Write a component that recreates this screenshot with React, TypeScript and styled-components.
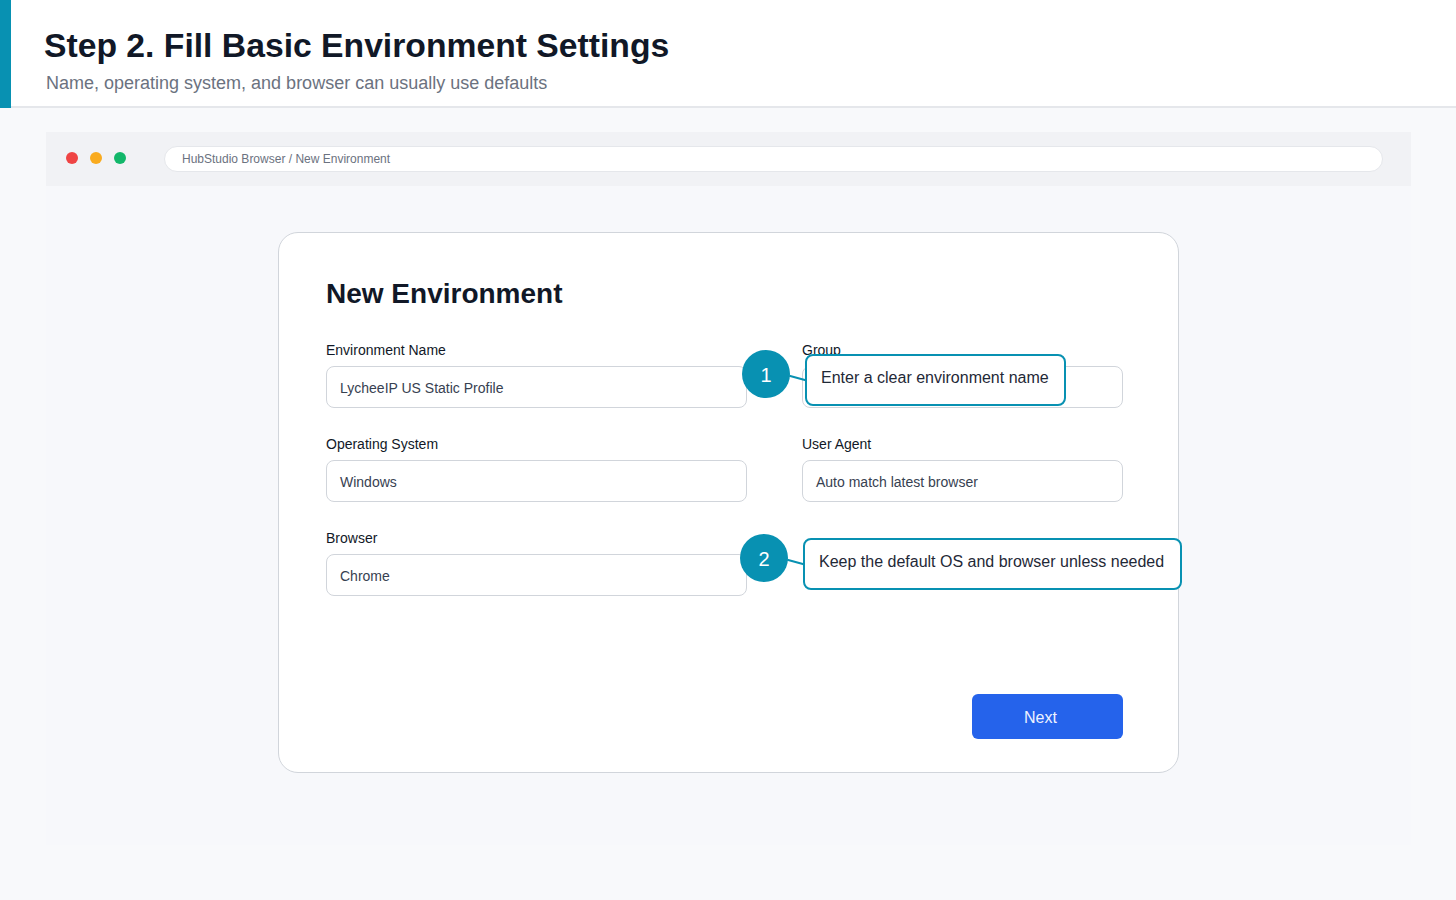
import React from "react";
import styled, { createGlobalStyle } from "styled-components";

const Global = createGlobalStyle`
  html, body { margin: 0; padding: 0; }
  body {
    background: #f8f9fb;
    font-family: "Liberation Sans", Arial, sans-serif;
    color: #111827;
  }
  * { box-sizing: border-box; }
`;

const Page = styled.div`
  width: 1456px;
  min-height: 900px;
  background: #f8f9fb;
`;

const Header = styled.header`
  height: 108px;
  display: flex;
  background: #ffffff;
`;

const Accent = styled.div`
  width: 11px;
  background: #0891b2;
  flex-shrink: 0;
`;

const HeaderInner = styled.div`
  flex: 1;
  border-bottom: 2px solid #e5e7eb;
  padding: 25px 0 0 33px;
`;

const Title = styled.h1`
  margin: 0;
  font-size: 33.7px;
  line-height: 40px;
  font-weight: 700;
  color: #111827;
`;

const Subtitle = styled.p`
  margin: 7px 0 0 2px;
  font-size: 18px;
  line-height: 22px;
  color: #6b7280;
`;

const Frame = styled.section`
  margin: 24px 0 0 46px;
  width: 1365px;
  height: 713px;
  background: #f7f8fb;
  display: flex;
  flex-direction: column;
`;

const TopBar = styled.div`
  height: 54px;
  background: #f1f2f5;
  display: flex;
  align-items: center;
  padding: 0 28px 0 20px;
`;

const Dots = styled.div`
  display: flex;
  gap: 12px;
  margin: 0 38px 2px 0;
`;

const Dot = styled.span<{ $c: string }>`
  width: 12px;
  height: 12px;
  border-radius: 50%;
  background: ${(p) => p.$c};
`;

const UrlBar = styled.div`
  flex: 1;
  height: 26px;
  background: #ffffff;
  border: 1px solid #e5e7eb;
  border-radius: 13px;
  display: flex;
  align-items: center;
  padding-left: 17px;
  font-size: 12px;
  color: #6b7280;
`;

const Body = styled.div`
  flex: 1;
  display: flex;
  justify-content: flex-start;
  padding: 46px 0 0 232px;
`;

const Card = styled.div`
  position: relative;
  width: 901px;
  height: 541px;
  background: #ffffff;
  border: 1px solid #d1d5db;
  border-radius: 20px;
  padding: 44px 55px 0 47px;
  display: flex;
  flex-direction: column;
`;

const CardTitle = styled.h2`
  margin: 0;
  font-size: 28px;
  line-height: 34px;
  font-weight: 700;
  color: #111827;
`;

const FormGrid = styled.div`
  margin-top: 31px;
  display: grid;
  grid-template-columns: 421px 321px;
  column-gap: 55px;
  row-gap: 28px;
  align-items: start;
`;

const Field = styled.div`
  display: flex;
  flex-direction: column;
  gap: 7px;
`;

const Label = styled.label`
  font-size: 14px;
  line-height: 17px;
  color: #111827;
`;

const Input = styled.div`
  height: 42px;
  border: 1px solid #d1d5db;
  border-radius: 8px;
  display: flex;
  align-items: center;
  padding: 2px 0 0 13px;
  font-size: 14px;
  color: #374151;
`;

const Footer = styled.div`
  margin-top: auto;
  margin-bottom: 33px;
  display: flex;
  justify-content: flex-end;
`;

const NextButton = styled.button`
  width: 151px;
  height: 45px;
  border: none;
  border-radius: 6px;
  background: #2563eb;
  color: #eef2ff;
  font-family: inherit;
  font-size: 16px;
  padding: 2px 14px 0 0;
  cursor: pointer;
`;

const Callout = styled.div<{ $top: number; $left: number }>`
  position: absolute;
  top: ${(p) => p.$top}px;
  left: ${(p) => p.$left}px;
  display: flex;
  align-items: flex-start;
`;

const Badge = styled.div`
  width: 48px;
  height: 48px;
  border-radius: 50%;
  background: #0891b2;
  color: #ffffff;
  font-size: 20px;
  padding-top: 3px;
  display: flex;
  align-items: center;
  justify-content: center;
  flex-shrink: 0;
`;

const Connector = styled.div`
  width: 17px;
  height: 2px;
  background: #0891b2;
  transform: rotate(15deg);
  margin: 27px -1px 0 -1px;
  flex-shrink: 0;
`;

const Bubble = styled.div<{ $w: number }>`
  margin-top: 4px;
  width: ${(p) => p.$w}px;
  height: 52px;
  background: #ffffff;
  border: 2px solid #0891b2;
  border-radius: 8px;
  display: flex;
  align-items: center;
  padding: 0 0 5px 14px;
  font-size: 16px;
  color: #1f2937;
  white-space: nowrap;
`;

const fields = [
  { label: "Environment Name", value: "LycheeIP US Static Profile" },
  { label: "Group", value: "" },
  { label: "Operating System", value: "Windows" },
  { label: "User Agent", value: "Auto match latest browser" },
  { label: "Browser", value: "Chrome" },
];

export default function App() {
  return (
    <Page>
      <Global />
      <Header>
        <Accent />
        <HeaderInner>
          <Title>Step 2. Fill Basic Environment Settings</Title>
          <Subtitle>Name, operating system, and browser can usually use defaults</Subtitle>
        </HeaderInner>
      </Header>
      <Frame>
        <TopBar>
          <Dots>
            <Dot $c="#ef4444" />
            <Dot $c="#f9ab1f" />
            <Dot $c="#12b76a" />
          </Dots>
          <UrlBar>HubStudio Browser / New Environment</UrlBar>
        </TopBar>
        <Body>
          <Card>
            <CardTitle>New Environment</CardTitle>
            <FormGrid>
              {fields.map((f) => (
                <Field key={f.label}>
                  <Label>{f.label}</Label>
                  <Input>{f.value}</Input>
                </Field>
              ))}
            </FormGrid>
            <Footer>
              <NextButton>Next</NextButton>
            </Footer>
            <Callout $top={117} $left={463}>
              <Badge>1</Badge>
              <Connector />
              <Bubble $w={261}>Enter a clear environment name</Bubble>
            </Callout>
            <Callout $top={301} $left={461}>
              <Badge>2</Badge>
              <Connector />
              <Bubble $w={379}>Keep the default OS and browser unless needed</Bubble>
            </Callout>
          </Card>
        </Body>
      </Frame>
    </Page>
  );
}
